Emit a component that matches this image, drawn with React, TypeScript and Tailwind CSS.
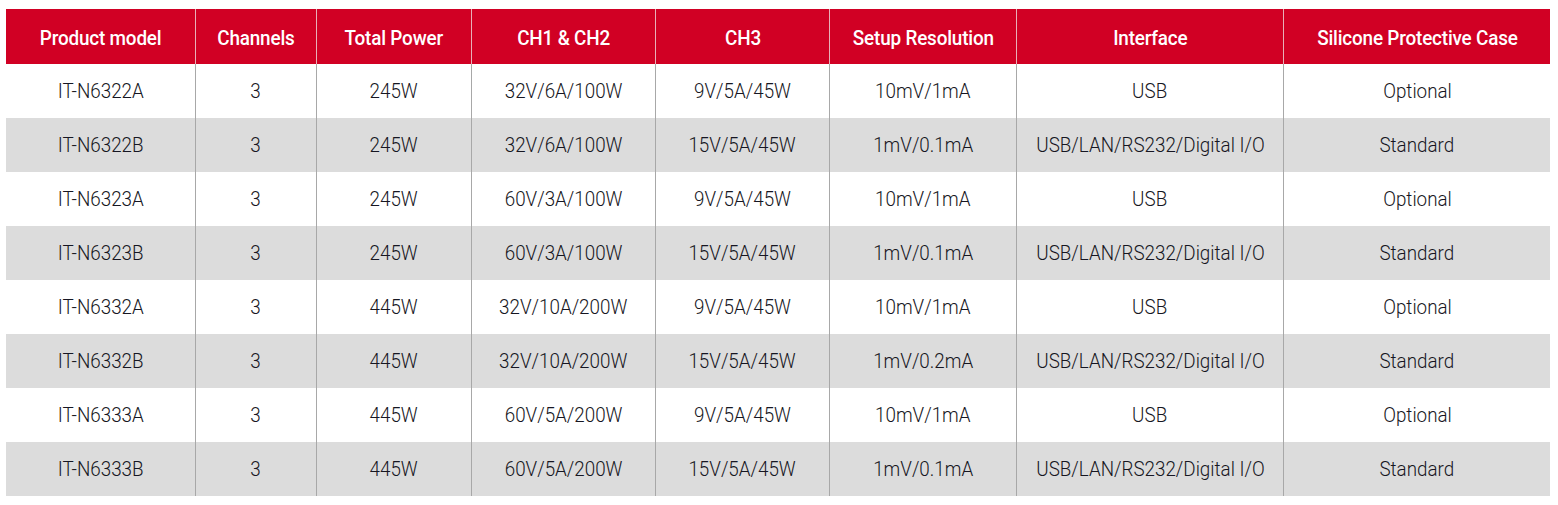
import React from "react";

const headers = [
  "Product model",
  "Channels",
  "Total Power",
  "CH1 & CH2",
  "CH3",
  "Setup Resolution",
  "Interface",
  "Silicone Protective Case",
];

const rows: string[][] = [
  ["IT-N6322A", "3", "245W", "32V/6A/100W", "9V/5A/45W", "10mV/1mA", "USB", "Optional"],
  ["IT-N6322B", "3", "245W", "32V/6A/100W", "15V/5A/45W", "1mV/0.1mA", "USB/LAN/RS232/Digital I/O", "Standard"],
  ["IT-N6323A", "3", "245W", "60V/3A/100W", "9V/5A/45W", "10mV/1mA", "USB", "Optional"],
  ["IT-N6323B", "3", "245W", "60V/3A/100W", "15V/5A/45W", "1mV/0.1mA", "USB/LAN/RS232/Digital I/O", "Standard"],
  ["IT-N6332A", "3", "445W", "32V/10A/200W", "9V/5A/45W", "10mV/1mA", "USB", "Optional"],
  ["IT-N6332B", "3", "445W", "32V/10A/200W", "15V/5A/45W", "1mV/0.2mA", "USB/LAN/RS232/Digital I/O", "Standard"],
  ["IT-N6333A", "3", "445W", "60V/5A/200W", "9V/5A/45W", "10mV/1mA", "USB", "Optional"],
  ["IT-N6333B", "3", "445W", "60V/5A/200W", "15V/5A/45W", "1mV/0.1mA", "USB/LAN/RS232/Digital I/O", "Standard"],
];

const grid =
  "grid grid-cols-[189px_121px_155px_184px_174px_187px_267px_267px]";

export default function App() {
  return (
    <div
      className="w-[1558px] h-[505px] bg-white pt-[9px] pl-[6px]"
      style={{ fontFamily: "Roboto, 'Liberation Sans', sans-serif" }}
    >
      <div className="w-[1544px]">
        <div className={`${grid} h-[55px] bg-[#d10024]`}>
          {headers.map((h, i) => (
            <div
              key={h}
              className={`flex items-center justify-center pt-[4px] text-white text-[21px] font-medium tracking-[-0.2px] ${
                i > 0 ? "border-l border-[#e8b0b8]" : ""
              }`}
            >
              <span className="inline-block scale-x-[0.9]">{h}</span>
            </div>
          ))}
        </div>
        {rows.map((r, ri) => (
          <div
            key={ri}
            className={`${grid} h-[54px] ${ri % 2 === 1 ? "bg-[#dcdcdc]" : "bg-white"}`}
          >
            {r.map((c, ci) => (
              <div
                key={ci}
                className={`flex items-center justify-center text-[#161622] text-[20px] font-light ${
                  ci > 0 ? "border-l border-[#a8a8a8]" : ""
                }`}
              >
                <span className="inline-block scale-x-[0.94]">{c}</span>
              </div>
            ))}
          </div>
        ))}
      </div>
    </div>
  );
}
